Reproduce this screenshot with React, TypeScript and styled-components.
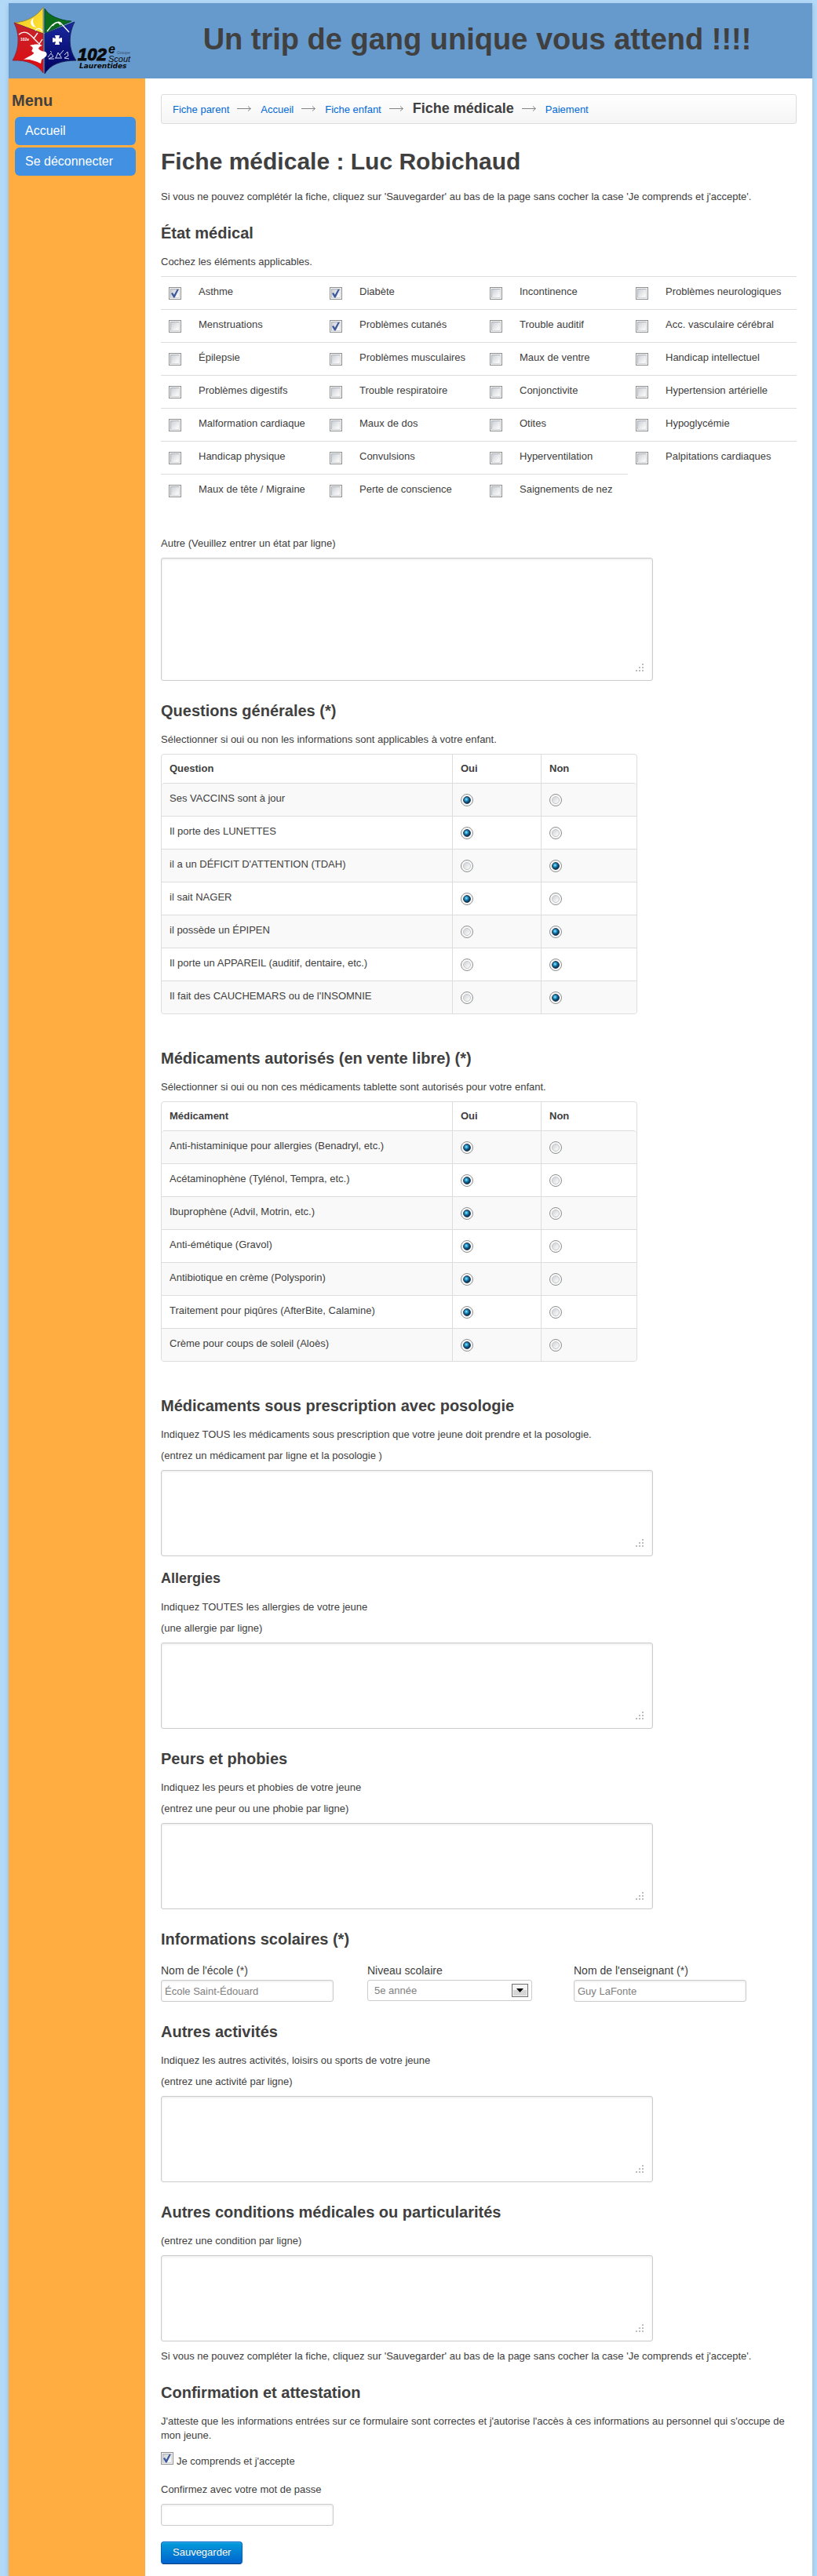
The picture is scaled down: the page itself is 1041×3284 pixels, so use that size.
import React, { useState } from "react";
import styled, { createGlobalStyle } from "styled-components";

const FONT = '"Liberation Sans", Arial, Helvetica, sans-serif';

const GlobalStyle = createGlobalStyle`
  *, *::before, *::after { box-sizing: border-box; }
  body {
    margin: 0;
    background: #b2d9f8;
    color: #404040;
    font: 13px/18px ${FONT};
  }
  input, select, textarea, button { font: inherit; }
`;

const Frame = styled.div`
  min-height: 100vh;
  padding: 4px 6px 0 11px;
  display: flex;
`;

const Page = styled.div`
  flex: 1;
  min-width: 0;
  display: flex;
  flex-direction: column;
  background: #fff;
  box-shadow: 0 2px 6px rgba(0, 0, 0, 0.15);
`;

const Header = styled.header`
  height: 96px;
  display: flex;
  align-items: center;
  background: #6699cc;
`;

const LogoLink = styled.a`
  flex: none;
  width: 170px;
  height: 96px;
`;

const Banner = styled.p`
  flex: 1;
  margin: 0;
  padding-bottom: 4px;
  text-align: center;
  font-size: 38px;
  line-height: 44px;
  font-weight: bold;
`;

const Body = styled.div`
  flex: 1;
  display: flex;
`;

const Sidebar = styled.nav`
  flex: none;
  width: 174px;
  padding: 16px 12px 0 8px;
  background: #ffad40;
`;

const MenuTitle = styled.h3`
  margin: 0 0 9px -4px;
  font-size: 20px;
  line-height: 24px;
`;

const MenuList = styled.ul`
  list-style: none;
  margin: 0;
  padding: 0;
  display: flex;
  flex-direction: column;
  gap: 3px;
`;

const MenuLink = styled.a`
  display: block;
  padding: 9px 13px;
  border-radius: 6px;
  background: #4190e2;
  color: #fff;
  font-size: 16px;
  text-decoration: none;
`;

const Content = styled.main`
  flex: 1;
  min-width: 0;
  padding: 20px 20px 15px;
`;

const Crumbs = styled.ol`
  list-style: none;
  margin: 0 0 30px;
  padding: 5px 14px;
  min-height: 37px;
  display: flex;
  flex-wrap: wrap;
  align-items: baseline;
  border: 1px solid #ddd;
  border-radius: 3px;
  background: linear-gradient(#fff, #f5f5f5);
  box-shadow: inset 0 1px 0 #fff;
`;

const Crumb = styled.li`
  display: flex;
  align-items: baseline;
  line-height: 24px;

  a { color: #0069d6; text-decoration: none; }
  strong { font-size: 18px; }
  svg { margin: 0 12px 0 10px; }
`;

const Title = styled.h1`
  margin: 0 0 18px;
  font-size: 30px;
  line-height: 36px;
`;

const Form = styled.form`
  display: flex;
  flex-direction: column;
  align-items: flex-start;
`;

const Heading = styled.h3`
  margin: 16px 0;
  font-size: 20px;
  line-height: 24px;
`;

const SubHeading = styled.h4`
  margin: 6px 0 16px;
  font-size: 18px;
  line-height: 24px;
`;

const Text = styled.p`
  margin: 0 0 9px;
`;

const TextLabel = styled.label`
  display: block;
  margin: 0 0 9px;
`;

const CheckBox = styled.input.attrs({ type: "checkbox" })`
  appearance: none;
  flex: none;
  display: grid;
  width: 16px;
  height: 16px;
  margin: 0;
  padding: 1px;
  border: 1px solid #8e8f8f;
  background: #f6f6f6;

  &::before {
    content: "";
    grid-area: 1 / 1;
    border: 1px solid;
    border-color: #aeb3b9 #d5d8dc #d5d8dc #aeb3b9;
    background: linear-gradient(135deg, #cbcfd5, #f6f6f6 80%);
  }
  &:checked::after {
    content: "";
    grid-area: 1 / 1;
    width: 10px;
    height: 11px;
    place-self: center;
    background: #3f5a9c;
    clip-path: polygon(0 50%, 20% 42%, 38% 66%, 78% 0, 98% 4%, 46% 100%, 30% 100%);
  }
`;

const Radio = styled.input.attrs({ type: "radio" })`
  appearance: none;
  display: grid;
  width: 16px;
  height: 16px;
  margin: 0;
  padding: 2px;
  border: 1px solid #8e8f8f;
  border-radius: 50%;
  background: #f8f8f8;

  &::before {
    content: "";
    border: 1px solid #c3c6ca;
    border-radius: 50%;
    background: linear-gradient(135deg, #ced1d6, #f6f6f6 80%);
  }
  &:checked::before {
    border-color: #2c3e52;
    background: radial-gradient(circle at 40% 38%, #b4e8fa 0, #2ea6d8 24%, #0d5a86 50%, #08233f 80%);
  }
`;

const StateTable = styled.table`
  width: 100%;
  margin-bottom: 38px;
  table-layout: fixed;
  border-spacing: 0;

  td {
    padding: 10px 0 10px 10px;
    border-top: 1px solid #ddd;
    vertical-align: top;
  }
  input { margin: 3px 0 2px; }
`;

const ChoiceTable = styled.table`
  width: 100%;
  max-width: 607px;
  margin-bottom: 28px;
  table-layout: fixed;
  border: 1px solid #ddd;
  border-radius: 4px;
  border-spacing: 0;

  th, td {
    padding: 10px;
    text-align: left;
    vertical-align: top;
  }
  th { padding: 9px 10px; }
  td { border-top: 1px solid #ddd; }
  th + th, td + td { border-left: 1px solid #ddd; }
  tbody tr:nth-child(odd) td { background: #f9f9f9; }
  tbody tr:first-child td:first-child { border-top-left-radius: 4px; }
  tbody tr:first-child td:last-child { border-top-right-radius: 4px; }
  tbody tr:last-child td:first-child { border-bottom-left-radius: 4px; }
  tbody tr:last-child td:last-child { border-bottom-right-radius: 4px; }
  input { margin: 3px 0 2px; }
`;

const AreaBox = styled.div`
  position: relative;
  width: 100%;
  max-width: 627px;
  margin-bottom: 10px;

  svg {
    position: absolute;
    right: 12px;
    bottom: 12px;
    pointer-events: none;
  }
`;

const Area = styled.textarea<{ $tall?: boolean }>`
  display: block;
  width: 100%;
  height: ${(p) => (p.$tall ? 157 : 110)}px;
  padding: 4px;
  resize: none;
  border: 1px solid #ccc;
  border-radius: 3px;
  color: #808080;
  background: #fff;
  box-shadow: inset 0 1px 3px rgba(0, 0, 0, 0.1);
`;

const Fields = styled.div`
  width: 100%;
  margin-bottom: 10px;
  display: grid;
  grid-template-columns: repeat(3, minmax(0, 220px));
  column-gap: 43px;
`;

const FieldLabel = styled.label`
  display: block;
  font-size: 14px;
  line-height: 24px;
`;

const TextInput = styled.input`
  display: block;
  width: 100%;
  max-width: 220px;
  height: 28px;
  padding: 4px;
  border: 1px solid #ccc;
  border-radius: 3px;
  color: #808080;
  background: #fff;
  box-shadow: inset 0 1px 3px rgba(0, 0, 0, 0.1);
`;

const SelectBox = styled.div`
  position: relative;
  max-width: 210px;

  svg {
    position: absolute;
    top: 5px;
    right: 5px;
    pointer-events: none;
  }
`;

const Select = styled.select`
  appearance: none;
  display: block;
  width: 100%;
  height: 27px;
  padding: 4px 28px 4px 8px;
  border: 1px solid #ccc;
  border-radius: 3px;
  color: #808080;
  background: #fff;
`;

const Accept = styled.label`
  display: flex;
  align-items: flex-start;
  gap: 4px;
  margin-bottom: 18px;
  padding-top: 3px;

  span { padding-top: 3px; }
`;

const SaveButton = styled.button`
  margin-top: 20px;
  height: 29px;
  padding: 4px 14px 5px;
  border: 1px solid;
  border-color: #0064cd #0064cd #003f81;
  border-radius: 4px;
  background: linear-gradient(#049cdb, #0064cd);
  box-shadow: inset 0 1px 0 rgba(255, 255, 255, 0.2), 0 1px 2px rgba(0, 0, 0, 0.05);
  color: #fff;
  text-shadow: 0 -1px 0 rgba(0, 0, 0, 0.25);
  cursor: pointer;
`;

function Logo() {
  return (
    <svg width="167" height="96" viewBox="11 4 167 96" role="img" aria-label="102e Groupe Scout Laurentides">
      <defs>
        <linearGradient id="gYellow" x1="0" y1="0" x2="1" y2="1">
          <stop offset="0" stopColor="#f0c419" />
          <stop offset="1" stopColor="#ffe53b" />
        </linearGradient>
        <linearGradient id="gRed" x1="0" y1="0" x2="0" y2="1">
          <stop offset="0" stopColor="#c4242c" />
          <stop offset="1" stopColor="#e00a10" />
        </linearGradient>
        <linearGradient id="gBlue" x1="0" y1="0" x2="0" y2="1">
          <stop offset="0" stopColor="#1a2aa0" />
          <stop offset="1" stopColor="#00005c" />
        </linearGradient>
      </defs>
      <path d="M55 9C48 20 34 28 18 29L55 43Z" fill="url(#gYellow)" stroke="#8f8a4a" />
      <path d="M57 11C62 20 76 26 91 27L57 42Z" fill="#0d6b1c" stroke="#0a4a30" />
      <path d="M18 29C26 45 24 64 16 77C34 76 48 82 55 93V43Z" fill="url(#gRed)" stroke="#8b2a3e" />
      <path d="M95 28C86 46 88 64 97 77C78 77 64 82 57 94V43Z" fill="url(#gBlue)" stroke="#15245f" />
      <path d="M43 23C37 26 38 34 46 35C42 31 41 27 43 23Z" fill="#fff" />
      <path d="M45 39C48 35 52 36 54 40M24 44C31 38 37 42 43 49L51 57M43 49L48 42M50 56L54 50" fill="none" stroke="#fff" strokeWidth="1.3" />
      <path d="M60 40C65 33 72 26 77 29L88 41M67 33C70 28 75 27 77 32" fill="none" stroke="#fff" strokeWidth="1.3" />
      <path d="M38 58C44 56 50 56 54 58C45 61 50 65 58 66C62 70 58 73 53 76L52 81C44 77 36 75 30 76C38 71 44 69 43 67C36 64 47 62 38 58Z" fill="#fff" />
      <path d="M70 45H76L75 49L79 48V54L75 53L76 57H70L71 53L67 54V48L71 49Z" fill="#fff" />
      <path d="M61 73L65 68L68 72L62 75L69 75M74 67L71 74M74 67L78 73M70 74H79M64 65L66 67M81 64L76 70M82 70L86 66L87 71L82 74L88 75" fill="none" stroke="#d7dcf5" />
      <g fill="#0a0a0a" fontFamily={FONT}>
        <text x="26" y="52" fill="#fff" fontSize="5" fontWeight="bold">102e</text>
        <text x="99" y="77" fontSize="22" fontWeight="bold" fontStyle="italic" stroke="#0a0a0a">102</text>
        <text x="138" y="68" fontSize="16" fontWeight="bold" fontStyle="italic">e</text>
        <text x="149" y="69" fill="#35506e" fontSize="5">Groupe</text>
        <text x="138" y="79" fontSize="11" fontStyle="italic">Scout</text>
        <text x="101" y="87" fontFamily='"DejaVu Sans", sans-serif' fontSize="9" fontWeight="bold" fontStyle="italic">Laurentides</text>
      </g>
    </svg>
  );
}

const Arrow = () => (
  <svg width="18" height="9" viewBox="0 0 18 9" fill="none" stroke="#858585" aria-hidden="true">
    <path d="M0 3.500H17M14 0.500L17.500 3.500L14 6.500" />
  </svg>
);

const Grip = () => (
  <svg width="10" height="10" viewBox="0 0 10 10" fill="#bdbdbd" aria-hidden="true">
    <path d="M8 0h2v2h-2zM4 4h2v2h-2zM8 4h2v2h-2zM0 8h2v2h-2zM4 8h2v2h-2zM8 8h2v2h-2z" />
  </svg>
);

const DropMark = () => (
  <svg width="21" height="17" viewBox="0 0 21 17" aria-hidden="true">
    <rect x="0.500" y="0.500" width="20" height="16" fill="#f4f4f4" stroke="#707070" />
    <rect x="2" y="8" width="17" height="7" fill="#d6d6d6" />
    <path d="M6 6h9l-4.500 5z" fill="#000" />
  </svg>
);

const STATES = [
  ["Asthme", "Diabète", "Incontinence", "Problèmes neurologiques"],
  ["Menstruations", "Problèmes cutanés", "Trouble auditif", "Acc. vasculaire cérébral"],
  ["Épilepsie", "Problèmes musculaires", "Maux de ventre", "Handicap intellectuel"],
  ["Problèmes digestifs", "Trouble respiratoire", "Conjonctivite", "Hypertension artérielle"],
  ["Malformation cardiaque", "Maux de dos", "Otites", "Hypoglycémie"],
  ["Handicap physique", "Convulsions", "Hyperventilation", "Palpitations cardiaques"],
  ["Maux de tête / Migraine", "Perte de conscience", "Saignements de nez"],
];
const CHECKED = ["Asthme", "Diabète", "Problèmes cutanés"];
const STATE_COLUMNS = [38, 167, 38, 166, 38, 148, 38, 177];

const QUESTIONS: [string, boolean][] = [
  ["Ses VACCINS sont à jour", true],
  ["Il porte des LUNETTES", true],
  ["il a un DÉFICIT D'ATTENTION (TDAH)", false],
  ["il sait NAGER", true],
  ["il possède un ÉPIPEN", false],
  ["Il porte un APPAREIL (auditif, dentaire, etc.)", false],
  ["Il fait des CAUCHEMARS ou de l'INSOMNIE", false],
];

const DRUGS: [string, boolean][] = [
  ["Anti-histaminique pour allergies (Benadryl, etc.)", true],
  ["Acétaminophène (Tylénol, Tempra, etc.)", true],
  ["Ibuprophène (Advil, Motrin, etc.)", true],
  ["Anti-émétique (Gravol)", true],
  ["Antibiotique en crème (Polysporin)", true],
  ["Traitement pour piqûres (AfterBite, Calamine)", true],
  ["Crème pour coups de soleil (Aloès)", true],
];

function Choices({ name, title, rows }: { name: string; title: string; rows: [string, boolean][] }) {
  return (
    <ChoiceTable>
      <colgroup>
        <col />
        <col width="113" />
        <col width="122" />
      </colgroup>
      <thead>
        <tr>
          <th scope="col">{title}</th>
          <th scope="col" id={`${name}-oui`}>Oui</th>
          <th scope="col" id={`${name}-non`}>Non</th>
        </tr>
      </thead>
      <tbody>
        {rows.map(([text, yes], i) => {
          const id = `${name}-${i}`;
          return (
            <tr key={id}>
              <td id={id}>{text}</td>
              <td><Radio name={id} value="oui" defaultChecked={yes} aria-labelledby={`${id} ${name}-oui`} /></td>
              <td><Radio name={id} value="non" defaultChecked={!yes} aria-labelledby={`${id} ${name}-non`} /></td>
            </tr>
          );
        })}
      </tbody>
    </ChoiceTable>
  );
}

function Notes({ id, label, tall }: { id: string; label: string; tall?: boolean }) {
  return (
    <>
      <TextLabel htmlFor={id}>{label}</TextLabel>
      <AreaBox>
        <Area id={id} name={id} $tall={tall} />
        <Grip />
      </AreaBox>
    </>
  );
}

export default function App() {
  const [level, setLevel] = useState("5e année");

  return (
    <Frame>
      <GlobalStyle />
      <Page>
        <Header>
          <LogoLink href="#accueil"><Logo /></LogoLink>
          <Banner>Un trip de gang unique vous attend !!!!</Banner>
        </Header>
        <Body>
          <Sidebar>
            <MenuTitle>Menu</MenuTitle>
            <MenuList>
              <li><MenuLink href="#accueil">Accueil</MenuLink></li>
              <li><MenuLink href="#deconnexion">Se déconnecter</MenuLink></li>
            </MenuList>
          </Sidebar>
          <Content>
            <Crumbs>
              <Crumb><a href="#parent">Fiche parent</a><Arrow /></Crumb>
              <Crumb><a href="#accueil">Accueil</a><Arrow /></Crumb>
              <Crumb><a href="#enfant">Fiche enfant</a><Arrow /></Crumb>
              <Crumb><strong>Fiche médicale</strong><Arrow /></Crumb>
              <Crumb><a href="#paiement">Paiement</a></Crumb>
            </Crumbs>
            <Title>Fiche médicale : Luc Robichaud</Title>
            <Form onSubmit={(e) => e.preventDefault()}>
              <Text>
                Si vous ne pouvez complétér la fiche, cliquez sur 'Sauvegarder' au bas de la page sans cocher la case 'Je comprends et j'accepte'.
              </Text>

              <Heading>État médical</Heading>
              <Text>Cochez les éléments applicables.</Text>
              <StateTable>
                <colgroup>
                  {STATE_COLUMNS.map((w, i) => <col key={i} width={w} />)}
                </colgroup>
                <tbody>
                  {STATES.map((row, r) => (
                    <tr key={r}>
                      {row.map((text, c) => {
                        const id = `etat-${r}-${c}`;
                        return (
                          <React.Fragment key={id}>
                            <td><CheckBox id={id} defaultChecked={CHECKED.includes(text)} /></td>
                            <td><label htmlFor={id}>{text}</label></td>
                          </React.Fragment>
                        );
                      })}
                    </tr>
                  ))}
                </tbody>
              </StateTable>
              <Notes id="autre" label="Autre (Veuillez entrer un état par ligne)" tall />

              <Heading>Questions générales (*)</Heading>
              <Text>Sélectionner si oui ou non les informations sont applicables à votre enfant.</Text>
              <Choices name="question" title="Question" rows={QUESTIONS} />

              <Heading>Médicaments autorisés (en vente libre) (*)</Heading>
              <Text>Sélectionner si oui ou non ces médicaments tablette sont autorisés pour votre enfant.</Text>
              <Choices name="medicament" title="Médicament" rows={DRUGS} />

              <Heading>Médicaments sous prescription avec posologie</Heading>
              <Text>Indiquez TOUS les médicaments sous prescription que votre jeune doit prendre et la posologie.</Text>
              <Notes id="prescription" label="(entrez un médicament par ligne et la posologie )" />

              <SubHeading>Allergies</SubHeading>
              <Text>Indiquez TOUTES les allergies de votre jeune</Text>
              <Notes id="allergies" label="(une allergie par ligne)" />

              <Heading>Peurs et phobies</Heading>
              <Text>Indiquez les peurs et phobies de votre jeune</Text>
              <Notes id="peurs" label="(entrez une peur ou une phobie par ligne)" />

              <Heading>Informations scolaires (*)</Heading>
              <Fields>
                <div>
                  <FieldLabel htmlFor="ecole">Nom de l'école (*)</FieldLabel>
                  <TextInput id="ecole" type="text" defaultValue="École Saint-Édouard" />
                </div>
                <div>
                  <FieldLabel htmlFor="niveau">Niveau scolaire</FieldLabel>
                  <SelectBox>
                    <Select id="niveau" value={level} onChange={(e) => setLevel(e.target.value)}>
                      <option>5e année</option>
                    </Select>
                    <DropMark />
                  </SelectBox>
                </div>
                <div>
                  <FieldLabel htmlFor="enseignant">Nom de l'enseignant (*)</FieldLabel>
                  <TextInput id="enseignant" type="text" defaultValue="Guy LaFonte" />
                </div>
              </Fields>

              <Heading>Autres activités</Heading>
              <Text>Indiquez les autres activités, loisirs ou sports de votre jeune</Text>
              <Notes id="activites" label="(entrez une activité par ligne)" />

              <Heading>Autres conditions médicales ou particularités</Heading>
              <Notes id="conditions" label="(entrez une condition par ligne)" />
              <Text>
                Si vous ne pouvez compléter la fiche, cliquez sur 'Sauvegarder' au bas de la page sans cocher la case 'Je comprends et j'accepte'.
              </Text>

              <Heading>Confirmation et attestation</Heading>
              <Text>
                J'atteste que les informations entrées sur ce formulaire sont correctes et j'autorise l'accès à ces informations au personnel qui s'occupe de mon jeune.
              </Text>
              <Accept>
                <CheckBox defaultChecked />
                <span>Je comprends et j'accepte</span>
              </Accept>
              <TextLabel htmlFor="passe">Confirmez avec votre mot de passe</TextLabel>
              <TextInput id="passe" type="password" />
              <SaveButton type="submit">Sauvegarder</SaveButton>
            </Form>
          </Content>
        </Body>
      </Page>
    </Frame>
  );
}
